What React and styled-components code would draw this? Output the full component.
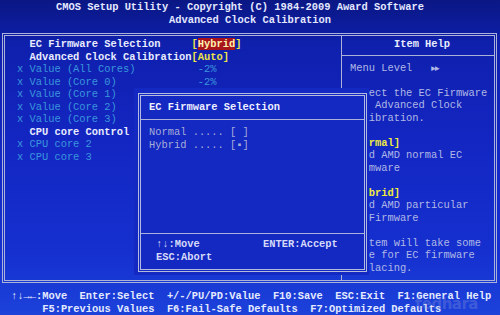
import React from 'react'
import styled, { createGlobalStyle } from 'styled-components'

const GlobalStyle = createGlobalStyle`
  html, body {
    margin: 0;
    padding: 0;
    background: #0c1a8c;
  }
  body {
    font-family: "Liberation Mono", "DejaVu Sans Mono", monospace;
  }
`

const Screen = styled.div`
  position: relative;
  width: 500px;
  height: 315px;
  overflow: hidden;
  display: flex;
  flex-direction: column;
  background: linear-gradient(180deg, #0a1784 0%, #0f20ad 14%, #1326c2 45%, #1530cf 80%, #1c42da 100%);
  font-size: 10.4px;
  line-height: 12.5px;
  font-weight: bold;
  white-space: pre;
`

const Header = styled.header`
  height: 33px;
  box-sizing: border-box;
  padding-top: 1px;
  display: flex;
  flex-direction: column;
  align-items: center;
  color: #e4e8ff;
`

const HeaderLine = styled.div`
  padding-right: ${(p) => p.$shift || 0}px;
`

const Frame = styled.main`
  position: relative;
  height: 250px;
  box-sizing: border-box;
  margin: 0 3px 0 2px;
  border: 3px double #aab2da;
  display: grid;
  grid-template-columns: 337px 1fr;
`

const ItemPanel = styled.div`
  border-right: 1px solid #aab2da;
  padding: 2px 0 0 12px;
`

const Row = styled.div`
  display: flex;
  color: ${(p) => (p.$disabled ? '#3a96dc' : '#e8ecff')};
  font-weight: ${(p) => (p.$disabled ? 'normal' : 'bold')};
`

const Marker = styled.span`
  width: 2ch;
`

const Label = styled.span`
  width: 26ch;
`

const Value = styled.span`
  color: ${(p) => (p.$disabled ? '#3a96dc' : '#ece448')};
`

const Selected = styled.span`
  background: #a8141c;
  color: #fff0b0;
`

const HelpPanel = styled.aside`
  display: flex;
  flex-direction: column;
`

const HelpTitle = styled.div`
  height: 20px;
  box-sizing: border-box;
  padding-top: 2px;
  border-bottom: 1px solid #aab2da;
  text-align: center;
  padding-left: 8px;
  color: #e8ecff;
`

const HelpBody = styled.div`
  padding: 5.75px 0 0 8px;
  color: #b0b8e6;
  font-weight: normal;
`

const HelpLine = styled.div`
  height: 12.5px;
  color: ${(p) => (p.$accent ? '#f0ea40' : 'inherit')};
  font-weight: ${(p) => (p.$accent ? 'bold' : 'normal')};
`

const Arrows = styled.span`
  font-size: 8px;
  letter-spacing: -1px;
`

/* the popup owns whole character cells, its border sits inside them */
const Popup = styled.section`
  position: absolute;
  left: 129px;
  top: 52px;
  width: 235px;
  height: 187px;
  box-sizing: border-box;
  padding: 5px 2px 3px 4px;
  background: #1428c2;
  display: flex;
  flex-direction: column;
`

const PopupBox = styled.div`
  flex: 1;
  border: 3px double #b2badf;
  display: flex;
  flex-direction: column;
`

const PopupTitle = styled.div`
  padding: 4.75px 0 5.75px 8px;
  border-bottom: 1px solid #aab2da;
  color: #eef0ff;
`

const PopupBody = styled.div`
  flex: 1;
  padding: 6.25px 0 0 8px;
  color: #a6aed8;
  font-weight: normal;
`

const PopupKeys = styled.div`
  height: 36px;
  box-sizing: border-box;
  padding: 4px 0 0 15px;
  border-top: 1px solid #aab2da;
  display: grid;
  grid-template-columns: 107px auto;
  align-content: start;
  color: #d4daf8;
`

const Footer = styled.footer`
  padding: 7px 0 0 11px;
  color: #e4eaff;
`

const Watermark = styled.div`
  position: absolute;
  right: 22px;
  bottom: 5px;
  font-family: "DejaVu Sans", sans-serif;
  font-size: 15px;
  font-weight: bold;
  letter-spacing: -0.5px;
  color: rgba(150, 160, 220, 0.3);
`

const items = [
  { label: 'EC Firmware Selection', value: 'hybrid' },
  { label: 'Advanced Clock Calibration', value: '[Auto]' },
  { label: 'Value (All Cores)', value: ' -2%', disabled: true },
  { label: 'Value (Core 0)', value: ' -2%', disabled: true },
  { label: 'Value (Core 1)', disabled: true },
  { label: 'Value (Core 2)', disabled: true },
  { label: 'Value (Core 3)', disabled: true },
  { label: 'CPU core Control' },
  { label: 'CPU core 2', disabled: true },
  { label: 'CPU core 3', disabled: true },
]

const help = [
  { text: '' },
  { text: 'Select the EC Firmware' },
  { text: 'for Advanced Clock' },
  { text: 'Calibration.' },
  { text: '' },
  { text: '[Normal]', accent: true },
  { text: 'Load AMD normal EC' },
  { text: 'Firmware' },
  { text: '' },
  { text: '[Hybrid]', accent: true },
  { text: 'Load AMD particular' },
  { text: 'EC Firmware' },
  { text: '' },
  { text: 'System will take some' },
  { text: 'time for EC firmware' },
  { text: 'replacing.' },
]

function App() {
  return (
    <>
      <GlobalStyle />
      <Screen>
        <Header>
          <HeaderLine $shift={20}>CMOS Setup Utility - Copyright (C) 1984-2009 Award Software</HeaderLine>
          <HeaderLine>Advanced Clock Calibration</HeaderLine>
        </Header>

        <Frame>
          <ItemPanel>
            {items.map((it) => (
              <Row key={it.label} $disabled={it.disabled}>
                <Marker>{it.disabled ? 'x' : ' '}</Marker>
                <Label>{it.label}</Label>
                {it.value === 'hybrid' ? (
                  <Value>[<Selected>Hybrid</Selected>]</Value>
                ) : (
                  <Value $disabled={it.disabled}>{it.value}</Value>
                )}
              </Row>
            ))}
          </ItemPanel>

          <HelpPanel>
            <HelpTitle>Item Help</HelpTitle>
            <HelpBody>
              <HelpLine>Menu Level   <Arrows>►►</Arrows></HelpLine>
              {help.map((h, i) => (
                <HelpLine key={i} $accent={h.accent}>{h.text}</HelpLine>
              ))}
            </HelpBody>
          </HelpPanel>

          <Popup>
            <PopupBox>
              <PopupTitle>EC Firmware Selection</PopupTitle>
              <PopupBody>
                <div>Normal ..... [ ]</div>
                <div>Hybrid ..... [▪]</div>
              </PopupBody>
              <PopupKeys>
                <span>↑↓:Move</span>
                <span>ENTER:Accept</span>
                <span>ESC:Abort</span>
              </PopupKeys>
            </PopupBox>
          </Popup>
        </Frame>

        <Footer>
          <div>↑↓→←:Move  Enter:Select  +/-/PU/PD:Value  F10:Save  ESC:Exit  F1:General Help</div>
          <div>     F5:Previous Values  F6:Fail-Safe Defaults  F7:Optimized Defaults</div>
        </Footer>
        <Watermark>tedhara</Watermark>
      </Screen>
    </>
  )
}

export default App
